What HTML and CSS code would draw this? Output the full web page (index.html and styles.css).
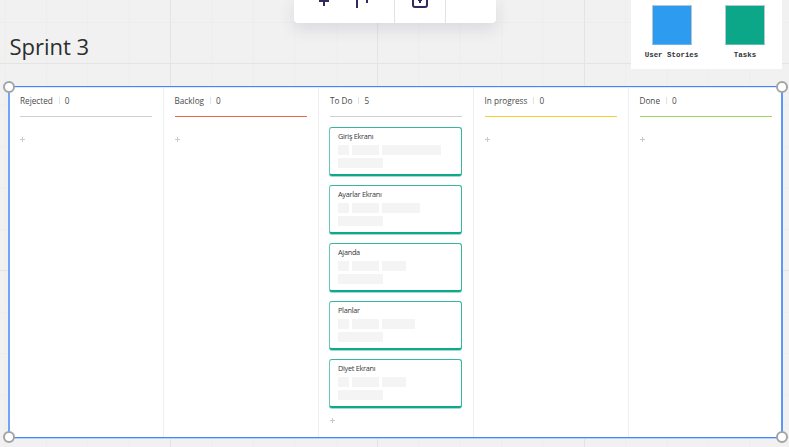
FILE: index.html
```html
<!DOCTYPE html>
<html lang="tr">
<head>
<meta charset="utf-8">
<title>Sprint 3</title>
<link rel="stylesheet" href="styles.css">
</head>
<body>
<main class="canvas">
  <header class="top"><h1>Sprint 3</h1></header>

  <div class="toolbar">
    <div class="group tools">
      <svg width="100" height="23" viewBox="0 0 100 23" fill="none" stroke="#322b5f" stroke-width="2">
        <path d="M25 1h10M30 -3v9M63 -4v12M73 -4v7"/>
      </svg>
    </div>
    <div class="group lock">
      <svg width="50" height="23" viewBox="0 0 50 23" fill="none" stroke="#322b5f" stroke-width="2">
        <path d="M18 -3v8q0 2 2 2h10q2 0 2-2v-8"/><path d="M25 -3v6M23 0h4"/>
      </svg>
    </div>
    <div class="group more"></div>
  </div>

  <aside class="legend">
    <div class="legend-item"><span class="swatch blue"></span><b>User Stories</b></div>
    <div class="legend-item"><span class="swatch green"></span><b>Tasks</b></div>
  </aside>

  <section class="board">
    <div class="column">
      <div class="head">Rejected<i></i><span>0</span></div>
      <div class="rule"></div>
      <div class="add"></div>
    </div>
    <div class="column">
      <div class="head">Backlog<i></i><span>0</span></div>
      <div class="rule red"></div>
      <div class="add"></div>
    </div>
    <div class="column">
      <div class="head">To Do<i></i><span>5</span></div>
      <div class="rule"></div>
      <div class="cards">
        <article class="card"><h2>Giriş Ekranı</h2><div class="bars"><s style="width:11px"></s><s style="width:27px"></s><s style="width:59px"></s></div><div class="bars"><s style="width:45px"></s></div></article>
        <article class="card"><h2>Ayarlar Ekranı</h2><div class="bars"><s style="width:11px"></s><s style="width:27px"></s><s style="width:38px"></s></div><div class="bars"><s style="width:45px"></s></div></article>
        <article class="card"><h2>Ajanda</h2><div class="bars"><s style="width:11px"></s><s style="width:27px"></s><s style="width:24px"></s></div><div class="bars"><s style="width:45px"></s></div></article>
        <article class="card"><h2>Planlar</h2><div class="bars"><s style="width:11px"></s><s style="width:27px"></s><s style="width:33px"></s></div><div class="bars"><s style="width:45px"></s></div></article>
        <article class="card"><h2>Diyet Ekranı</h2><div class="bars"><s style="width:11px"></s><s style="width:27px"></s><s style="width:24px"></s></div><div class="bars"><s style="width:45px"></s></div></article>
      </div>
      <div class="add"></div>
    </div>
    <div class="column">
      <div class="head">In progress<i></i><span>0</span></div>
      <div class="rule yellow"></div>
      <div class="add"></div>
    </div>
    <div class="column">
      <div class="head">Done<i></i><span>0</span></div>
      <div class="rule lime"></div>
      <div class="add"></div>
    </div>
    <span class="handle tl"></span><span class="handle tr"></span>
    <span class="handle bl"></span><span class="handle br"></span>
  </section>
</main>
</body>
</html>
```
FILE: styles.css
```css
* { box-sizing: border-box; }
body { margin: 0; overflow: hidden; font-family: "Open Sans", sans-serif; }

.canvas {
  position: relative;
  width: 789px;
  height: 447px;
  overflow: hidden;
  background-color: #f1f1f1;
  background-image:
    linear-gradient(90deg, #e4e4e4 1px, transparent 1px),
    linear-gradient(#e4e4e4 1px, transparent 1px),
    linear-gradient(90deg, #ededed 1px, transparent 1px),
    linear-gradient(#ededed 1px, transparent 1px);
  background-size: 207px 207px, 207px 207px, 41.4px 41.4px, 41.4px 41.4px;
  background-position: 170px 0, 0 63px, 4.5px 0, 0 22px;
}

.top { height: 86px; padding: 30px 0 0 9.5px; }
h1 { margin: 0; font-size: 22px; line-height: 32px; font-weight: 400; color: #2e2e2e; }

.toolbar {
  position: absolute;
  left: 294px;
  top: -1px;
  display: flex;
  width: 202px;
  height: 24px;
  padding-top: 1px;
  background: #fff;
  border-radius: 0 0 4px 4px;
  box-shadow: 0 6px 16px rgba(50, 45, 95, .12);
}
.group { height: 23px; overflow: hidden; border-right: 1px solid #e2e2e2; }
.tools { width: 101px; }
.lock { width: 51px; }
.more { width: 50px; border: 0; }
.group svg { display: block; }

.legend {
  position: absolute;
  left: 631px;
  top: 0;
  display: flex;
  width: 151px;
  height: 69px;
  padding: 5px 0 0 4px;
  background: #fff;
}
.legend-item { display: flex; flex-direction: column; align-items: center; width: 73px; }
.legend-item + .legend-item { width: 74px; }
.legend-item b { margin-top: 4px; font: bold 7.45px/12px "Liberation Mono", monospace; color: #333; white-space: nowrap; }
.swatch { width: 40px; height: 40px; border: 1px solid #b5c6d2; }
.blue { background: #2d9bf0; border-bottom-color: #6fb4e8; }
.green { background: #0ca789; border-bottom-color: #5fbfab; }

.board {
  position: relative;
  display: grid;
  grid-template-columns: 154px 155px 155px 155px 152px;
  width: 775px;
  height: 352px;
  margin-left: 8px;
  background: #fff;
  border: solid #3f87fb;
  border-width: 1px 2px;
  border-left-color: #6fa4fa;
  border-right-color: #5b98fa;
  box-shadow: inset 0 1px #dceafe, 0 1px #b7d1fa;
}
.column { padding-left: 10.5px; border-right: 1px solid #efefef; }
.column:first-child { padding-left: 10px; }
.column:nth-child(3) { padding-left: 11px; }
.column:nth-child(5) { border: 0; }
.head { display: flex; align-items: center; height: 28px; padding-bottom: 1px; font-size: 8.2px; color: #4a4a4a; white-space: nowrap; }
.head i { width: 1px; height: 7px; margin: 0 5px 0 6px; background: #e2e2e2; }
.rule { width: 132px; height: 1px; margin-top: 1px; background: #cfcfcf; }
.red { background: #f0624a; }
.yellow { background: #f8d02c; }
.lime { background: #99d85c; }

.add {
  width: 5px;
  height: 5px;
  margin-top: 20px;
  background:
    linear-gradient(#cacaca, #cacaca) center / 5px 1px no-repeat,
    linear-gradient(#cacaca, #cacaca) center / 1px 5px no-repeat;
}

.cards { display: flex; flex-direction: column; gap: 9px; padding-top: 10px; }
.cards + .add { margin-top: 10px; }
.card {
  width: 133px;
  height: 49px;
  margin-left: -1px;
  padding: 3px 0 0 8px;
  background: #fff;
  border: 1px solid #35b79d;
  border-left-color: #65c7b5;
  border-bottom: 2px solid #10a88b;
  border-radius: 3px;
  box-shadow: 0 1px #9fdccf;
}
.card h2 { margin: 0 0 4px; font-size: 7.3px; line-height: 10px; font-weight: 400; letter-spacing: -.27px; color: #383838; }
.bars { display: flex; gap: 3px; height: 10px; margin-bottom: 3px; }
.bars s { background: #f4f4f4; }

.handle { position: absolute; width: 12px; height: 12px; border: 2px solid #a4a4a4; border-radius: 50%; background: #fff; }
.tl, .bl { left: -7px; }
.tr, .br { right: -7px; }
.tl, .tr { top: -6px; }
.bl, .br { bottom: -6px; }
```
